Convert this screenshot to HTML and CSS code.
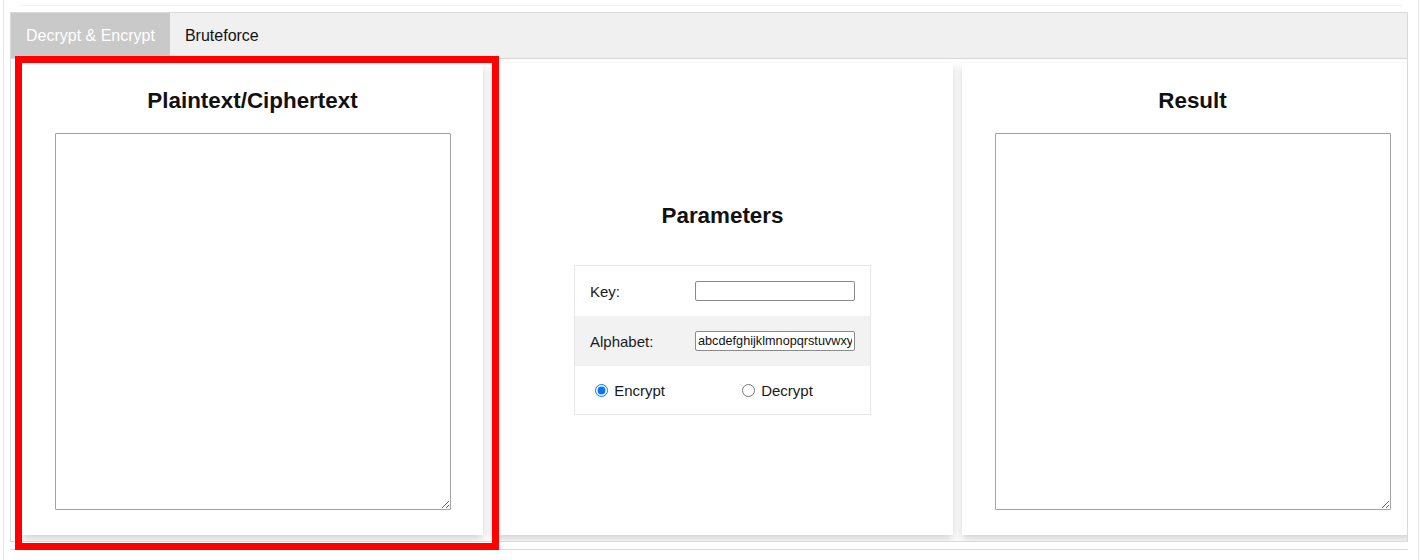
FILE: index.html
```html
<!DOCTYPE html>
<html lang="en">
<head>
<meta charset="utf-8">
<title>Cipher</title>
<link rel="stylesheet" href="styles.css">
</head>
<body>
<div class="page">
  <div class="topline"></div>
  <div class="tabs">
    <div class="tabbar">
      <div class="tab active">Decrypt &amp; Encrypt</div>
      <div class="tab">Bruteforce</div>
    </div>
    <div class="tab-content">
      <section class="panel text-panel">
        <h2 class="panel-title">Plaintext/Ciphertext</h2>
        <textarea class="big-text"></textarea>
      </section>
      <section class="panel params-panel">
        <h2 class="panel-title params-title">Parameters</h2>
        <div class="params">
          <div class="row">
            <div class="cell label">Key:</div>
            <div class="cell field"><input class="text-input" type="text"></div>
          </div>
          <div class="row alt">
            <div class="cell label">Alphabet:</div>
            <div class="cell field"><input class="text-input" type="text" value="abcdefghijklmnopqrstuvwxyz"></div>
          </div>
          <div class="row radios">
            <label class="cell radio-cell"><input class="radio" type="radio" name="mode" checked> Encrypt</label>
            <label class="cell radio-cell"><input class="radio" type="radio" name="mode"> Decrypt</label>
          </div>
        </div>
      </section>
      <section class="panel text-panel">
        <h2 class="panel-title">Result</h2>
        <textarea class="big-text"></textarea>
      </section>
    </div>
  </div>
  <div class="footer-line"></div>
</div>
<div class="highlight"></div>
</body>
</html>
```
FILE: styles.css
```css
html, body {
  margin: 0;
  padding: 0;
  background: #fff;
}
body {
  font-family: "Liberation Sans", Arial, sans-serif;
  color: #111;
  position: relative;
  overflow: hidden;
  height: 560px;
}
.page {
  margin: 0 3px;
  height: 560px;
  box-sizing: border-box;
  border-left: 1px solid #e6e6e6;
  border-right: 1px solid #e6e6e6;
  padding: 5px 10px 0 6px;
}
.topline {
  height: 1px;
  background: #f2f2f2;
  margin: 0 6px 6px 10px;
}
.tabs {
  border: 1px solid #dadada;
}
.tabbar {
  display: flex;
  height: 45px;
  background: #f0f0f0;
  border-bottom: 1px solid #d6d6d6;
}
.tab {
  padding: 0 15px;
  line-height: 45px;
  font-size: 16px;
  color: #111;
}
.tab.active {
  background: #c9c9c9;
  color: #fff;
}
.tab-content {
  height: 482px;
  box-sizing: border-box;
  padding: 4px 0 0 11px;
  display: flex;
  gap: 9px;
  overflow: hidden;
  background: #fff;
}
.panel {
  flex: 0 0 461px;
  height: 472px;
  box-sizing: border-box;
  background: #fff;
  box-shadow: 0 4px 8px 0 rgba(0, 0, 0, 0.18);
  display: flex;
  flex-direction: column;
  align-items: center;
}
.text-panel {
  padding-top: 25px;
}
.panel-title {
  margin: 0 0 19px;
  font-size: 22.4px;
  line-height: 26px;
  font-weight: bold;
  color: #111;
}
.big-text {
  width: 396px;
  height: 377px;
  box-sizing: border-box;
  border: 1px solid #a3a3a3;
  border-radius: 1px;
  margin: 0;
  padding: 2px;
  resize: both;
  font-family: "Liberation Mono", monospace;
  font-size: 13px;
  background: #fff;
}
.params-panel {
  justify-content: center;
  padding-top: 20px;
}
.params-title {
  margin-bottom: 36px;
}
.params {
  width: 297px;
  box-sizing: border-box;
  border: 1px solid #e6e6e6;
  font-size: 15px;
  color: #1a1a1a;
}
.row {
  display: grid;
  grid-template-columns: 105px 190px;
  align-items: center;
  height: 50px;
}
.row.alt {
  background: #f2f2f2;
}
.row.radios {
  grid-template-columns: 147px 148px;
  height: 48px;
}
.cell {
  padding: 0 15px;
}
.field {
  padding: 0 15px;
}
.text-input {
  display: block;
  width: 160px;
  height: 20px;
  box-sizing: border-box;
  border: 1px solid #8a8a8a;
  border-radius: 2px;
  padding: 1px 2px;
  margin: 0;
  font-family: "Liberation Sans", Arial, sans-serif;
  font-size: 12.7px;
  color: #111;
  background: #fff;
}
.radio-cell {
  display: flex;
  align-items: center;
  white-space: pre;
}
.radio {
  width: 13px;
  height: 13px;
  margin: 0 2px 0 5px;
}
.footer-line {
  margin-top: 7px;
  border-top: 1px solid #d9d9d9;
}
.highlight {
  position: absolute;
  left: 15px;
  top: 56px;
  width: 484px;
  height: 494px;
  box-sizing: border-box;
  border: 7px solid #ff0000;
  pointer-events: none;
}
```
